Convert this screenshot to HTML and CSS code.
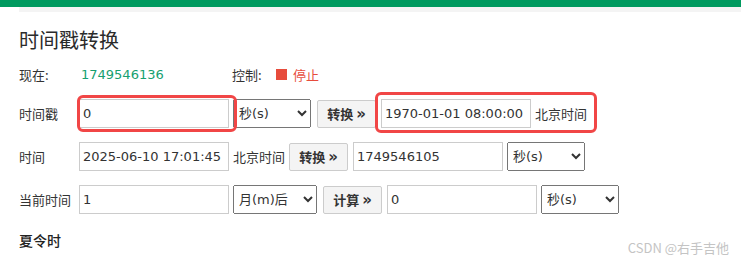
FILE: index.html
```html
<!DOCTYPE html>
<html lang="zh-CN">
<head>
<meta charset="utf-8">
<title>时间戳转换</title>
<link rel="stylesheet" href="styles.css">
</head>
<body>
<div class="topbar"></div>
<div class="strip"></div>
<main class="content">
  <h1 class="title">时间戳转换</h1>
  <div class="now-row">
    <span class="label">现在:</span>
    <span class="now-value">1749546136</span>
    <span class="ctrl-label">控制:</span>
    <span class="stop-box"></span>
    <span class="stop-text">停止</span>
  </div>
  <div class="row">
    <span class="label row-label">时间戳</span>
    <input class="field" type="text" value="0">
    <select class="sel sel-s"><option>秒(s)</option></select>
    <button class="btn">转换 <span class="arr">»</span></button>
    <input class="field" type="text" value="1970-01-01 08:00:00">
    <span class="tz">北京时间</span>
  </div>
  <div class="row">
    <span class="label row-label">时间</span>
    <input class="field" type="text" value="2025-06-10 17:01:45">
    <span class="tz">北京时间</span>
    <button class="btn">转换 <span class="arr">»</span></button>
    <input class="field" type="text" value="1749546105">
    <select class="sel sel-s"><option>秒(s)</option></select>
  </div>
  <div class="row">
    <span class="label row-label">当前时间</span>
    <input class="field" type="text" value="1">
    <select class="sel sel-m"><option>月(m)后</option></select>
    <button class="btn">计算 <span class="arr">»</span></button>
    <input class="field" type="text" value="0">
    <select class="sel sel-s"><option>秒(s)</option></select>
  </div>
  <h2 class="subtitle">夏令时</h2>
</main>
<div class="mark mark-1"></div>
<div class="mark mark-2"></div>
<div class="watermark">CSDN @右手吉他</div>
</body>
</html>
```
FILE: styles.css
```css
html, body {
  margin: 0;
  padding: 0;
}
body {
  width: 741px;
  height: 261px;
  overflow: hidden;
  position: relative;
  background: #fff;
  color: #333;
  font-family: "DejaVu Sans", "Noto Sans CJK SC", sans-serif;
  font-size: 13px;
}
.topbar {
  height: 7px;
  background: #009a5f;
}
.strip {
  height: 5px;
  margin-left: 19px;
  background: #f4f4f4;
}
.content {
  padding-left: 19px;
}
.title {
  margin: 14px 0 0;
  font-family: "Noto Sans CJK SC", sans-serif;
  font-size: 20px;
  font-weight: normal;
  line-height: 28px;
  color: #2b2b2b;
}
.now-row {
  display: flex;
  align-items: center;
  height: 20px;
  margin-top: 10px;
}
.label {
  width: 60px;
  flex: none;
  font-family: "Noto Sans CJK SC", sans-serif;
  font-size: 13px;
}
.row-label {
  width: 56px;
}
.now-value {
  width: 151px;
  margin-left: 2px;
  color: #16a070;
}
.ctrl-label {
  width: 44px;
  font-family: "Noto Sans CJK SC", sans-serif;
}
.stop-box {
  width: 11px;
  height: 11px;
  background: #e74c3c;
  margin-right: 6px;
}
.stop-text {
  font-family: "Noto Sans CJK SC", sans-serif;
  color: #e74c3c;
}
.row {
  display: flex;
  align-items: center;
  gap: 4px;
  height: 29px;
  margin-top: 15px;
}
.row + .row {
  margin-top: 14px;
}
.field {
  box-sizing: border-box;
  width: 150px;
  height: 29px;
  margin: 0;
  padding: 0 3px;
  border: 1px solid #ccc;
  font-family: "DejaVu Sans", "Noto Sans CJK SC", sans-serif;
  font-size: 13px;
  color: #333;
  outline: none;
}
.sel {
  box-sizing: border-box;
  height: 29px;
  margin: 0 2px 0 0;
  padding: 0 1px;
  font-family: "DejaVu Sans", "Noto Sans CJK SC", sans-serif;
  font-size: 13px;
  color: #333;
}
.sel-s { width: 78px; }
.sel-m { width: 84px; }
.btn {
  box-sizing: border-box;
  width: 59px;
  height: 28px;
  margin: 0 1px 0 0;
  padding: 0;
  border: 1px solid #ccc;
  border-radius: 2px;
  background: #f4f4f4;
  font-family: "Noto Sans CJK SC", sans-serif;
  font-size: 13px;
  font-weight: bold;
  color: #333;
}
.arr {
  font-family: "DejaVu Sans", sans-serif;
  font-size: 15px;
  font-weight: bold;
}
.tz {
  font-family: "Noto Sans CJK SC", sans-serif;
  font-size: 13px;
  color: #333;
}
.subtitle {
  margin: 16px 0 0;
  font-family: "Noto Sans CJK SC", sans-serif;
  font-size: 14px;
  font-weight: 500;
  line-height: 20px;
  color: #222;
}
.mark {
  position: absolute;
  box-sizing: border-box;
  border: 3px solid #f14646;
  border-radius: 6px;
}
.mark-1 {
  left: 77px;
  top: 95px;
  width: 160px;
  height: 37px;
}
.mark-2 {
  left: 375px;
  top: 92px;
  width: 222px;
  height: 41px;
}
.watermark {
  position: absolute;
  right: 12px;
  top: 240px;
  line-height: 16px;
  font-family: "Noto Sans CJK SC", sans-serif;
  font-size: 13px;
  color: #c4c4c4;
}
```
